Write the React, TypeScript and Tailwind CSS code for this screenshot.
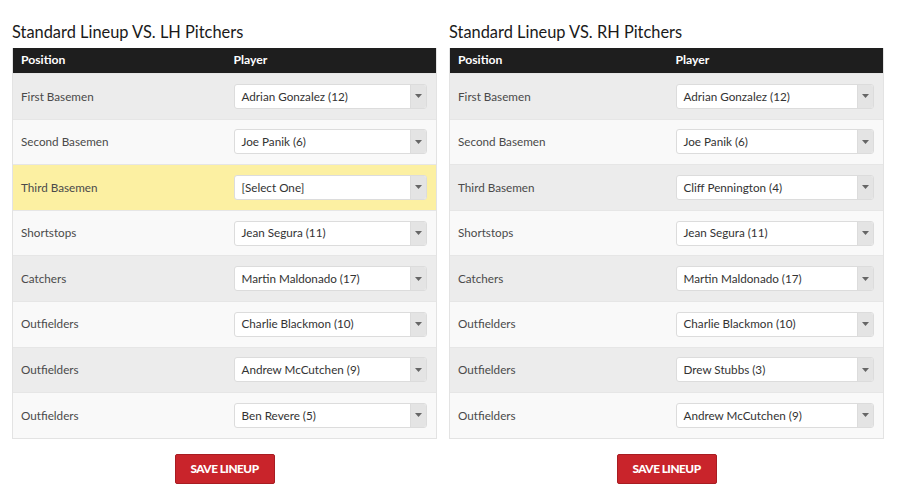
import React from "react";

type Row = { pos: string; player: string; highlight?: boolean };

const lh: Row[] = [
  { pos: "First Basemen", player: "Adrian Gonzalez (12)" },
  { pos: "Second Basemen", player: "Joe Panik (6)" },
  { pos: "Third Basemen", player: "[Select One]", highlight: true },
  { pos: "Shortstops", player: "Jean Segura (11)" },
  { pos: "Catchers", player: "Martin Maldonado (17)" },
  { pos: "Outfielders", player: "Charlie Blackmon (10)" },
  { pos: "Outfielders", player: "Andrew McCutchen (9)" },
  { pos: "Outfielders", player: "Ben Revere (5)" },
];

const rh: Row[] = [
  { pos: "First Basemen", player: "Adrian Gonzalez (12)" },
  { pos: "Second Basemen", player: "Joe Panik (6)" },
  { pos: "Third Basemen", player: "Cliff Pennington (4)" },
  { pos: "Shortstops", player: "Jean Segura (11)" },
  { pos: "Catchers", player: "Martin Maldonado (17)" },
  { pos: "Outfielders", player: "Charlie Blackmon (10)" },
  { pos: "Outfielders", player: "Drew Stubbs (3)" },
  { pos: "Outfielders", player: "Andrew McCutchen (9)" },
];

function Select({ value }: { value: string }) {
  return (
    <div className="flex h-[25px] w-full items-stretch rounded-[3px] border border-[#dcdcdc] bg-white">
      <div className="flex flex-1 items-center pl-[7px] text-[11.7px] text-[#333]">{value}</div>
      <div className="flex w-[16px] items-center justify-center rounded-r-[2px] border-l border-[#dcdcdc] bg-[#e4e4e4]">
        <svg width="7" height="4" viewBox="0 0 7 4">
          <path d="M0 0 L7 0 L3.5 4 Z" fill="#666" />
        </svg>
      </div>
    </div>
  );
}

function Panel({ title, rows, width }: { title: string; rows: Row[]; width: string }) {
  return (
    <div className={`flex flex-col ${width}`}>
      <h2 className="h-[48px] pt-[22px] text-[16.4px] leading-[20px] text-[#1a1a1a]">{title}</h2>
      <div className="border border-[#e3e3e3] border-t-0">
        <div className="grid h-[25px] grid-cols-2 items-center bg-[#1e1e1e] text-[12.2px] font-bold text-white">
          <div className="pl-[8px]">Position</div>
          <div className="pl-[9px]">Player</div>
        </div>
        {rows.map((r, i) => (
          <div
            key={i}
            className={`grid h-[45.6px] grid-cols-2 items-center border-t border-[#e6e6e6] first:border-t-0 ${
              r.highlight ? "bg-[#fcf0a2]" : i % 2 === 0 ? "bg-[#ececec]" : "bg-[#f9f9f9]"
            }`}
          >
            <div className="pl-[8px] text-[11.7px] text-[#4a4a4a]">{r.pos}</div>
            <div className="pl-[9px] pr-[9px]">
              <Select value={r.player} />
            </div>
          </div>
        ))}
      </div>
      <div className="flex justify-center pt-[15px]">
        <button className="h-[30px] w-[100px] rounded-[2px] border border-[#a81c22] bg-[#c9242b] text-[11.8px] font-black uppercase tracking-[-0.5px] text-white">
          Save Lineup
        </button>
      </div>
    </div>
  );
}

export default function App() {
  return (
    <div
      className="flex h-[493px] w-[900px] gap-[12px] bg-white pl-[12px]"
      style={{ fontFamily: "Lato, 'Noto Sans', sans-serif" }}
    >
      <Panel title="Standard Lineup VS. LH Pitchers" rows={lh} width="w-[425px]" />
      <Panel title="Standard Lineup VS. RH Pitchers" rows={rh} width="w-[435px]" />
    </div>
  );
}
